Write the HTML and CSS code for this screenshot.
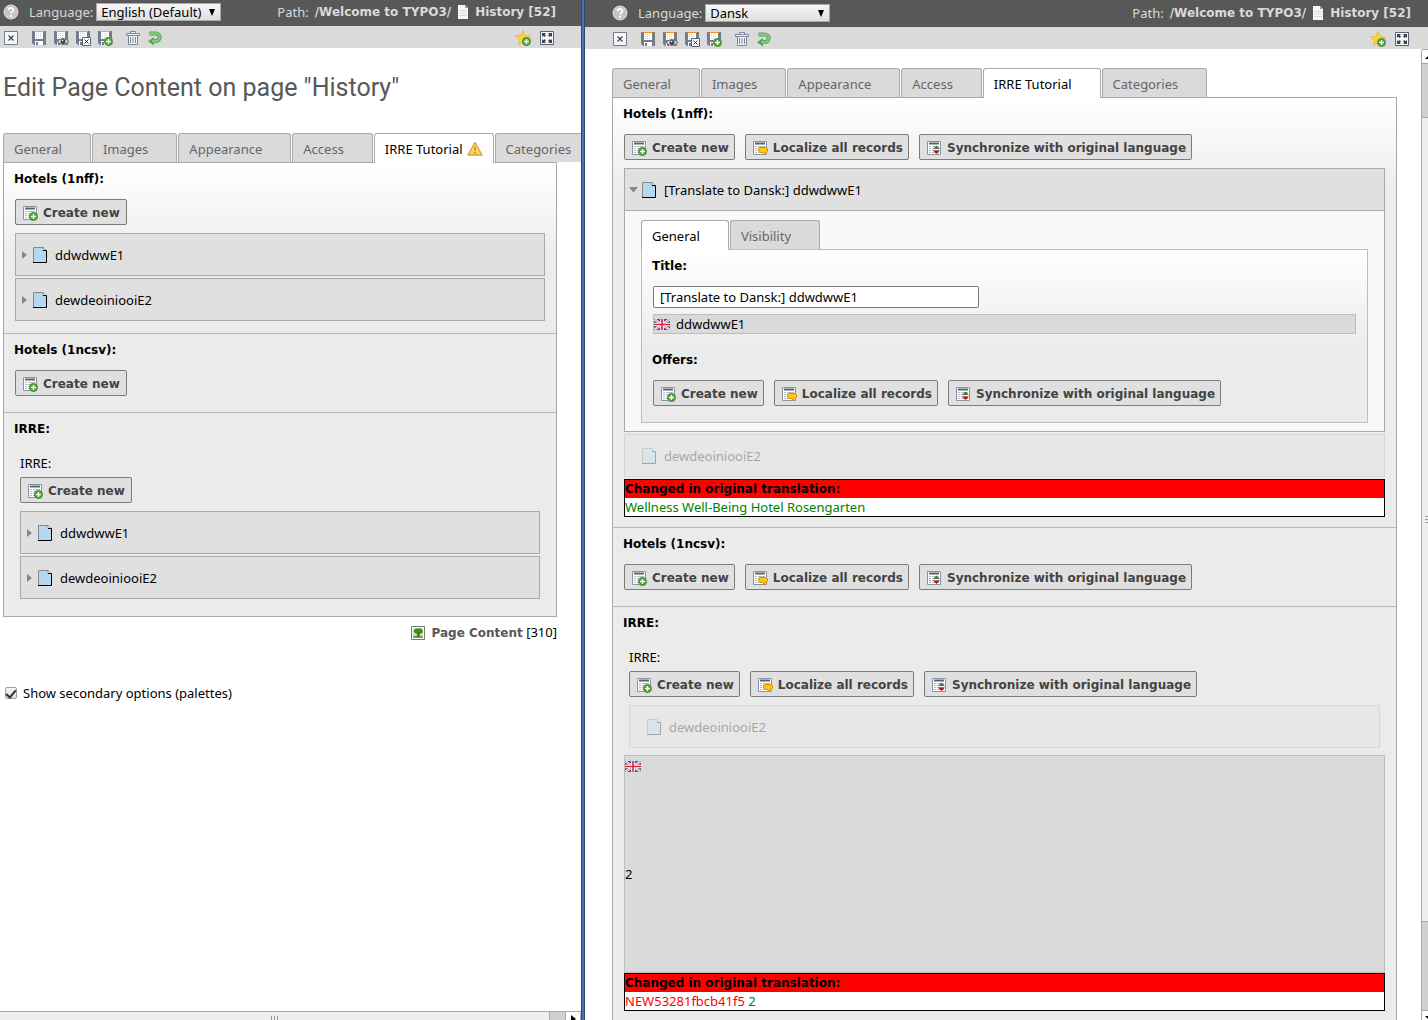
FILE: index.html
```html
<!DOCTYPE html>
<html lang="en">
<head>
<meta charset="utf-8">
<title>Edit Page Content</title>
<link rel="stylesheet" href="styles.css">
</head>
<body>
<svg class="sprite" aria-hidden="true">
  <defs>
    <linearGradient id="gold" x1="0" y1="0" x2="0" y2="1"><stop offset="0" stop-color="#fff0a0"/><stop offset="1" stop-color="#f7d04a"/></linearGradient>
    <g id="plus"><circle cx="11.500" cy="11.500" r="4.500" fill="#4f9a3a"/><path d="M11.500 9v5M9 11.500h5" stroke="#fff" stroke-width="1.400"/></g>
    <g id="disk"><path d="M1 1h14v14H3l-2-2z" fill="#737c8c"/><path d="M4 1h8v8H4z" fill="#fff"/><path d="M5 3.500h6M5 5.500h6M5 7.500h6" stroke="#c9cdd4" stroke-dasharray="1 1"/><path d="M3 1.500h10" stroke="currentColor"/><path d="M4 11h8v4H4z" fill="#fff"/><path d="M5 12h2v3H5z" fill="#737c8c"/></g>
    <g id="sheet"><path d="M1.500 1.500h13v13h-13z" fill="#fff" stroke="#8b94a5"/><path d="M3 3.500h10" stroke="#596273" stroke-width="2"/><path d="M3 6.500h2m1 0h7M3 8.500h2m1 0h7M3 10.500h2m1 0h7M3 12.500h2m1 0h7" stroke="#b4b9c3"/></g>
    <symbol id="i-help" viewBox="0 0 16 16"><circle cx="8" cy="8" r="7" fill="#c4c4c4" stroke="#e4e4e4"/><path d="M5.500 6.200C5.600 3.200 10.500 3.200 10.500 6c0 2-2.400 1.600-2.400 3.600M8.100 11v2" fill="none" stroke="#fff" stroke-width="1.700"/></symbol>
    <symbol id="i-close" viewBox="0 0 16 16"><path d="M1.500 1.500h13v13h-13z" fill="#f6f7f8" stroke="#737c8c"/><path d="M5.500 5.500l5 5M10.500 5.500l-5 5" stroke="#3c414b" stroke-width="1.200"/></symbol>
    <symbol id="i-save" viewBox="0 0 16 16"><use href="#disk"/></symbol>
    <symbol id="i-saveview" viewBox="0 0 16 16"><use href="#disk"/><path d="M4 11.500q6-6 12 0q-6 6-12 0" fill="#ddd" stroke="#666"/><circle cx="10" cy="11.500" r="2.500" fill="#444"/><circle cx="9.500" cy="10.500" r=".8" fill="#fff"/></symbol>
    <symbol id="i-saveclose" viewBox="0 0 16 16"><use href="#disk"/><path d="M7.500 7.500h8v8h-8z" fill="#fff" stroke="#596273"/><path d="M9.500 9.500l4 4M13.500 9.500l-4 4" stroke="#333"/></symbol>
    <symbol id="i-savenew" viewBox="0 0 16 16"><use href="#disk"/><use href="#plus"/></symbol>
    <symbol id="i-trash" viewBox="0 0 16 16"><path d="M5.500 3.500v-2h5v2M1.500 3.500h13v2h-13zM3.500 5.500v9h9v-9" fill="#f4f5f7" stroke="#7d8696"/><path d="M5.500 7v6M8 7v6M10.500 7v6" stroke="#7d8696"/></symbol>
    <symbol id="i-undo" viewBox="0 0 16 16"><path d="M2.500 3.500h6.500a3.400 3.400 0 0 1 0 7.500H6" fill="none" stroke="#4f9f52" stroke-width="4"/><path d="M7 7v8.500L1 11.200z" fill="#4fa552"/><path d="M2.500 3.500h6.500a3.400 3.400 0 0 1 0 7.500H5" fill="none" stroke="#84c97c" stroke-width="2.400"/></symbol>
    <symbol id="i-star" viewBox="0 0 16 16"><path d="M8 .7l2 5 5.500.3-4.200 3.500 1.400 5.300L8 12l-4.700 2.800 1.400-5.300L.5 6 6 5.700z" fill="#fcd733" stroke="#e9b52a" stroke-width=".8"/><use href="#plus"/></symbol>
    <symbol id="i-expand" viewBox="0 0 16 16"><path d="M1.500 1.500h13v13h-13z" fill="#f6f7f8" stroke="#596273"/><path d="M3 3h4L5.700 4.300 7 5.500 5.500 7 4.300 5.700 3 7zM13 3v4l-1.300-1.300L10.500 7 9 5.500l1.300-1.200L9 3zM3 13V9l1.300 1.300L5.500 9 7 10.500l-1.300 1.200L7 13zM13 13H9l1.300-1.300L9 10.500 10.500 9l1.200 1.300L13 9z" fill="#3c414b"/></symbol>
    <symbol id="i-page" viewBox="0 0 12 16"><path d="M1 1h7l3 3v11H1z" fill="#f8f8f8"/><path d="M8 1v3h3z" fill="#999"/><path d="M2 6.500h8M2 9h8M2 11.500h8" stroke="#d8d8d8"/></symbol>
    <symbol id="i-doc" viewBox="0 0 14 16"><path d="M.5 .5h10l3 3v12H.5z" fill="#b3d8f0"/><path d="M.5 15V.5h10" fill="none" stroke="#878787"/><path d="M10 .5l3 3h-3z" fill="#fff" stroke="#777" stroke-width=".6"/><path d="M10 3.500h3.500v12H0" fill="none" stroke="#000"/></symbol>
    <symbol id="i-new" viewBox="0 0 16 16"><use href="#sheet"/><use href="#plus"/></symbol>
    <symbol id="i-localize" viewBox="0 0 16 16"><use href="#sheet"/><path d="M7.500 7.500h6.500l1.500 1.500v2L14 12.500h-1L12.500 15l-2-2.500H8L6.500 11V9z" fill="#ffc90e" stroke="#e08a00"/></symbol>
    <symbol id="i-sync" viewBox="0 0 16 16"><use href="#sheet"/><path d="M7 9l3.500-3.500L14 9z" fill="#427c36"/><path d="M7 10.500h7L10.500 14z" fill="#c40d0d"/></symbol>
    <symbol id="i-warn" viewBox="0 0 16 16"><path d="M8 1.500l7 12.500H1z" fill="url(#gold)" stroke="#da9d3a" stroke-width="1.400" stroke-linejoin="round"/><path d="M8 5.500v4M8 10.800v1.700" stroke="#c08a1c" stroke-width="1.800"/></symbol>
    <symbol id="i-image" viewBox="0 0 16 16"><path d="M1.500 1.500h13v13h-13z" fill="#fff" stroke="#777"/><path d="M3 3h10v10H3z" fill="#c9e8b0"/><path d="M3 11.500q5-3 10 0V13H3z" fill="#62ad35"/><path d="M4 5q1-2 4-1.500Q12 2.500 13 6q0 3-3 2.500Q7 10 5 8 3 7 4 5z" fill="#3e8c1d"/><path d="M9 8l-1 4" stroke="#5d4022" stroke-width="1.500"/></symbol>
    <symbol id="i-flag" viewBox="0 0 16 11"><path d="M0 0h16v11H0z" fill="#3a4a96"/><path d="M0 0l16 11M16 0L0 11" stroke="#fff" stroke-width="2.400"/><path d="M0 0l16 11M16 0L0 11" stroke="#e05060" stroke-width=".8"/><path d="M8 0v11M0 5.500h16" stroke="#fff" stroke-width="3.600"/><path d="M8 0v11M0 5.500h16" stroke="#dc1f35" stroke-width="1.600"/></symbol>
  </defs>
</svg>

<div class="split">
  <section class="pane pane-left">
    <header class="topbar">
      <svg class="icon"><use href="#i-help"/></svg>
      <label class="lang-label" for="lang-a">Language:</label>
      <span class="select"><select id="lang-a"><option>English (Default)</option></select></span>
      <p class="path">Path: <b>/Welcome to TYPO3/</b> <svg class="icon-page"><use href="#i-page"/></svg> <b>History [52]</b></p>
    </header>
    <div class="toolbar">
      <button class="tool" aria-label="Close"><svg class="icon"><use href="#i-close"/></svg></button>
      <div class="tools">
        <button class="tool" aria-label="Save"><svg class="icon"><use href="#i-save"/></svg></button>
        <button class="tool" aria-label="Save and view"><svg class="icon"><use href="#i-saveview"/></svg></button>
        <button class="tool" aria-label="Save and close"><svg class="icon"><use href="#i-saveclose"/></svg></button>
        <button class="tool" aria-label="Save and create new"><svg class="icon"><use href="#i-savenew"/></svg></button>
      </div>
      <div class="tools">
        <button class="tool" aria-label="Delete"><svg class="icon"><use href="#i-trash"/></svg></button>
        <button class="tool" aria-label="Undo"><svg class="icon"><use href="#i-undo"/></svg></button>
      </div>
      <div class="tools tools-end">
        <button class="tool" aria-label="Bookmark"><svg class="icon"><use href="#i-star"/></svg></button>
        <button class="tool" aria-label="Open in new window"><svg class="icon"><use href="#i-expand"/></svg></button>
      </div>
    </div>
    <main class="doc">
      <h1>Edit Page Content on page "History"</h1>
      <nav class="tabs">
        <button class="tab">General</button>
        <button class="tab">Images</button>
        <button class="tab">Appearance</button>
        <button class="tab">Access</button>
        <button class="tab active flagged">IRRE Tutorial <svg class="icon"><use href="#i-warn"/></svg></button>
        <button class="tab">Categories</button>
      </nav>
      <div class="panel">
        <section class="field">
          <h2>Hotels (1nff):</h2>
          <div class="actions"><button class="btn"><svg class="icon"><use href="#i-new"/></svg>Create new</button></div>
          <div class="records">
            <div class="record"><i class="caret"></i><svg class="icon-doc"><use href="#i-doc"/></svg>ddwdwwE1</div>
            <div class="record"><i class="caret"></i><svg class="icon-doc"><use href="#i-doc"/></svg>dewdeoiniooiE2</div>
          </div>
        </section>
        <section class="field">
          <h2>Hotels (1ncsv):</h2>
          <div class="actions"><button class="btn"><svg class="icon"><use href="#i-new"/></svg>Create new</button></div>
        </section>
        <section class="field">
          <h2>IRRE:</h2>
          <div class="sub">
            <h3>IRRE:</h3>
            <div class="actions"><button class="btn"><svg class="icon"><use href="#i-new"/></svg>Create new</button></div>
            <div class="records">
              <div class="record"><i class="caret"></i><svg class="icon-doc"><use href="#i-doc"/></svg>ddwdwwE1</div>
              <div class="record"><i class="caret"></i><svg class="icon-doc"><use href="#i-doc"/></svg>dewdeoiniooiE2</div>
            </div>
          </div>
        </section>
      </div>
      <p class="type"><svg class="icon"><use href="#i-image"/></svg><span><b>Page Content</b> [310]</span></p>
      <label class="palettes"><input type="checkbox" checked>Show secondary options (palettes)</label>
    </main>
    <div class="hscroll"><span class="hthumb"></span><span class="htrack"></span><span class="hend"></span></div>
  </section>

  <div class="divider"></div>

  <section class="pane pane-right">
    <header class="topbar">
      <svg class="icon"><use href="#i-help"/></svg>
      <label class="lang-label" for="lang-b">Language:</label>
      <span class="select"><select id="lang-b"><option>Dansk</option></select></span>
      <p class="path">Path: <b>/Welcome to TYPO3/</b> <svg class="icon-page"><use href="#i-page"/></svg> <b>History [52]</b></p>
    </header>
    <div class="toolbar">
      <button class="tool" aria-label="Close"><svg class="icon"><use href="#i-close"/></svg></button>
      <div class="tools">
        <button class="tool" aria-label="Save"><svg class="icon"><use href="#i-save"/></svg></button>
        <button class="tool" aria-label="Save and view"><svg class="icon"><use href="#i-saveview"/></svg></button>
        <button class="tool" aria-label="Save and close"><svg class="icon"><use href="#i-saveclose"/></svg></button>
        <button class="tool" aria-label="Save and create new"><svg class="icon"><use href="#i-savenew"/></svg></button>
      </div>
      <div class="tools">
        <button class="tool" aria-label="Delete"><svg class="icon"><use href="#i-trash"/></svg></button>
        <button class="tool" aria-label="Undo"><svg class="icon"><use href="#i-undo"/></svg></button>
      </div>
      <div class="tools tools-end">
        <button class="tool" aria-label="Bookmark"><svg class="icon"><use href="#i-star"/></svg></button>
        <button class="tool" aria-label="Open in new window"><svg class="icon"><use href="#i-expand"/></svg></button>
      </div>
    </div>
    <div class="scroller">
      <main class="doc">
        <nav class="tabs">
          <button class="tab">General</button>
          <button class="tab">Images</button>
          <button class="tab">Appearance</button>
          <button class="tab">Access</button>
          <button class="tab active">IRRE Tutorial</button>
          <button class="tab">Categories</button>
        </nav>
        <div class="panel">
          <section class="field">
            <h2>Hotels (1nff):</h2>
            <div class="actions">
              <button class="btn"><svg class="icon"><use href="#i-new"/></svg>Create new</button>
              <button class="btn"><svg class="icon"><use href="#i-localize"/></svg>Localize all records</button>
              <button class="btn"><svg class="icon"><use href="#i-sync"/></svg>Synchronize with original language</button>
            </div>
            <div class="records compact">
              <div class="opened">
                <div class="record"><i class="caret down"></i><svg class="icon-doc"><use href="#i-doc"/></svg>[Translate to Dansk:] ddwdwwE1</div>
                <div class="opened-body">
                  <nav class="tabs">
                    <button class="tab active">General</button>
                    <button class="tab">Visibility</button>
                  </nav>
                  <div class="panel soft">
                    <section class="field">
                      <h2><label for="title">Title:</label></h2>
                      <input class="text" id="title" type="text" value="[Translate to Dansk:] ddwdwwE1">
                      <p class="origin"><svg class="icon-flag"><use href="#i-flag"/></svg>ddwdwwE1</p>
                      <h2>Offers:</h2>
                      <div class="actions">
                        <button class="btn"><svg class="icon"><use href="#i-new"/></svg>Create new</button>
                        <button class="btn"><svg class="icon"><use href="#i-localize"/></svg>Localize all records</button>
                        <button class="btn"><svg class="icon"><use href="#i-sync"/></svg>Synchronize with original language</button>
                      </div>
                    </section>
                  </div>
                </div>
              </div>
              <div class="record dim"><i class="caret none"></i><svg class="icon-doc"><use href="#i-doc"/></svg>dewdeoiniooiE2</div>
              <div class="changed"><h4>Changed in original translation:</h4><p class="ins">Wellness Well-Being Hotel Rosengarten</p></div>
            </div>
          </section>
          <section class="field">
            <h2>Hotels (1ncsv):</h2>
            <div class="actions">
              <button class="btn"><svg class="icon"><use href="#i-new"/></svg>Create new</button>
              <button class="btn"><svg class="icon"><use href="#i-localize"/></svg>Localize all records</button>
              <button class="btn"><svg class="icon"><use href="#i-sync"/></svg>Synchronize with original language</button>
            </div>
          </section>
          <section class="field">
            <h2>IRRE:</h2>
            <div class="sub flush">
              <h3>IRRE:</h3>
              <div class="actions">
                <button class="btn"><svg class="icon"><use href="#i-new"/></svg>Create new</button>
                <button class="btn"><svg class="icon"><use href="#i-localize"/></svg>Localize all records</button>
                <button class="btn"><svg class="icon"><use href="#i-sync"/></svg>Synchronize with original language</button>
              </div>
              <div class="records">
                <div class="record dim"><i class="caret none"></i><svg class="icon-doc"><use href="#i-doc"/></svg>dewdeoiniooiE2</div>
              </div>
            </div>
            <div class="source"><svg class="icon-flag"><use href="#i-flag"/></svg><p>2</p></div>
            <div class="changed"><h4>Changed in original translation:</h4><p><span class="del">NEW53281fbcb41f5</span> <span class="ins">2</span></p></div>
          </section>
        </div>
      </main>
      <div class="vscroll"><span class="vup"></span><span class="vtrack"></span><span class="vthumb"></span><span class="vtrack low"></span><span class="vdown"></span></div>
    </div>
  </section>
</div>
</body>
</html>
```
FILE: styles.css
```css
* { box-sizing: border-box; }

body {
  margin: 0;
  background: #fff;
  color: #000;
  font: 13px/20px "Noto Sans", sans-serif;
}

b, h2, h4, .btn { font-family: "DejaVu Sans", sans-serif; font-size: 12px; font-weight: bold; }
h1, h2, h3, h4, p { margin: 0; }
button, input, select { font: inherit; color: inherit; margin: 0; }

.sprite { position: absolute; width: 0; height: 0; }
.icon { width: 16px; height: 16px; flex: none; display: block; }
.icon-doc { width: 14px; height: 16px; flex: none; }
.icon-page { width: 12px; height: 16px; flex: none; }
.icon-flag { width: 16px; height: 11px; flex: none; display: block; }

.split {
  display: grid;
  grid-template-columns: minmax(0, 581fr) 4px minmax(0, 843fr);
  height: 100vh;
}
.pane { display: flex; flex-direction: column; min-height: 0; overflow: hidden; }
.divider { background: #4472c4; border: solid #3c4658; border-width: 0 1px; }

/* Bars above each document */
.topbar {
  display: flex;
  align-items: center;
  flex: none;
  height: 26px;
  padding: 0 25px 2px 3px;
  background: #585858;
  color: #dadada;
}
.lang-label { margin: 0 3px 0 10px; }
.select { position: relative; display: block; width: 125px; height: 18px; color: #000; }
.select select {
  display: block;
  width: 100%;
  height: 18px;
  padding: 0 4px;
  border: 1px solid #aaa;
  border-radius: 0;
  background: linear-gradient(#f8f8f8, #dedede);
  line-height: 16px;
  appearance: none;
}
.select::after {
  content: "";
  position: absolute;
  right: 6px;
  top: 6px;
  border: solid transparent;
  border-width: 7px 3px 0;
  border-top-color: #000;
  pointer-events: none;
}
.path { display: flex; align-items: center; gap: 6px; margin-left: auto; white-space: nowrap; }
.toolbar {
  display: flex;
  gap: 12px;
  align-items: center;
  flex: none;
  height: 22px;
  padding: 2px 26px 0 3px;
  background: #dadada;
}
.tools { display: flex; gap: 6px; }
.tools-end { gap: 8px; margin-left: auto; }
.tool { padding: 0; border: 0; background: none; color: #d8a878; }
.pane-right .topbar { height: 27px; padding: 0 17px 1px 27px; }
.pane-right .toolbar { padding-left: 27px; padding-right: 18px; }
.pane-right .tool { color: #f58a1f; }

/* Documents */
.doc { flex: 1; min-width: 0; min-height: 0; overflow: hidden; }
.pane-left .doc { padding: 24px 24px 0 3px; }
.pane-right .doc { padding: 19px 24px 0 27px; }
.scroller { display: flex; flex: 1; min-height: 0; }

h1 {
  margin-bottom: 29px;
  color: #585858;
  font: 25px/32px Roboto, sans-serif;
  white-space: nowrap;
}

.tabs { display: flex; gap: 1px; }
.tab {
  flex: none;
  display: flex;
  align-items: center;
  height: 29px;
  padding: 1px 28px 0 10px;
  border: 1px solid #a9a9a9;
  border-bottom: 0;
  border-radius: 3px 3px 0 0;
  background: #dadada;
  color: #666;
}
.tab.active { height: 30px; margin-bottom: -1px; padding-top: 0; background: #fff; color: #000; position: relative; }
.tab.flagged { gap: 4px; padding-right: 10px; }

.panel { border: 1px solid #a9a9a9; background: #ebebeb linear-gradient(#fff, #ebebeb) 0 0 / 100% 100px no-repeat; }
.panel.soft { border-color: #bdbdbd; }
.field { padding: 6px 11px 8px; }
.field + .field { border-top: 1px solid #b9b9b9; }
.pane-right .field:nth-child(3) { padding-bottom: 24px; }
.field h2 { margin: 0 -1px 10px; line-height: 20px; }
.sub { padding: 4px 5px 5px; }
.sub.flush { padding-bottom: 3px; }
.sub h3 { margin-bottom: 4px; font-size: 13px; font-weight: normal; }

.actions { display: flex; gap: 10px; margin-bottom: 8px; }
.btn {
  display: flex;
  align-items: center;
  gap: 5px;
  height: 26px;
  padding: 1px 6px 0;
  border: 1px solid #7b7b7b;
  border-radius: 2px;
  background: #e0e0e0;
  color: #434343;
  white-space: nowrap;
}
.btn:not(:only-child) { padding-right: 5px; }

.records { display: flex; flex-direction: column; gap: 2px; margin-bottom: 4px; }
.records.compact { margin-bottom: 2px; }
.record {
  display: flex;
  align-items: center;
  height: 43px;
  padding: 0 6px;
  border: 1px solid #a9a9a9;
  background: #e0e0e0;
}
.record .icon-doc { margin-right: 8px; }
.record.dim { opacity: .3; }
.caret { width: 5px; margin-right: 6px; border: solid transparent; border-width: 4px 0 4px 5px; border-left-color: #8c857c; }
.caret.down { width: 9px; margin: 0 4px 0 -2px; border-width: 5px 4px 0; border-color: #8c857c transparent transparent; }
.caret.none { border-color: transparent; }

.opened { border: 1px solid #a9a9a9; background: #f9f9f9; }
.opened .record { height: 42px; border-width: 0 0 1px; padding: 0 6px; }
.opened-body { padding: 9px 16px 8px; }
.text {
  display: block;
  width: 326px;
  max-width: 100%;
  height: 22px;
  padding: 0 6px;
  border: 1px solid #7b7b7b;
  border-radius: 2px;
  background: #fff;
}
.origin {
  display: flex;
  align-items: center;
  gap: 6px;
  height: 20px;
  margin: 6px 0 16px;
  border: 1px solid #bdbdbd;
  background: #dadada;
}

.changed { border: 1px solid #000; background: #fff; line-height: 18px; }
.changed h4 { background: #f00; }
.ins { color: #008000; }
.del { color: #f00; }
.source { height: 218px; padding-top: 5px; border: 1px solid #bdbdbd; background: #dadada; }
.source p { margin-top: 92px; }

.type { display: flex; justify-content: flex-end; align-items: center; gap: 6px; margin-top: 5px; }
.type b { color: #585858; }
.palettes { display: flex; align-items: center; gap: 6px; margin: 40px 0 0 2px; }
.palettes input {
  display: grid;
  place-items: center;
  width: 12px;
  height: 12px;
  border: 1px solid #a0a0a0;
  border-radius: 2px;
  background: linear-gradient(#f4f4f4, #dedede);
  appearance: none;
}
.palettes input:checked::before {
  content: "";
  width: 4px;
  height: 8px;
  margin-bottom: 2px;
  border: solid #333;
  border-width: 0 2px 2px 0;
  transform: rotate(40deg);
}

/* Scrollbars */
.hscroll { display: flex; flex: none; height: 9px; border-top: 1px solid #a9a9a9; }
.hthumb { flex: 1; background: #efefef; }
.hthumb::after { content: ""; display: block; width: 7px; height: 5px; margin: 4px auto 0; background: repeating-linear-gradient(90deg, #999 0 1px, transparent 1px 3px); }
.htrack { width: 17px; border: solid #a9a9a9; border-width: 0 1px; background: #d0d0d0; }
.hend { width: 15px; border-radius: 0 3px 0 0; border-right: 1px solid #a9a9a9; }
.hend::after { content: ""; display: block; width: 5px; margin: 3px 0 0 5px; border: solid transparent; border-width: 4px 0 4px 5px; border-left-color: #000; }
.vscroll { display: flex; flex-direction: column; flex: none; width: 7px; overflow: hidden; border: solid #a9a9a9; border-width: 1px 0 0 1px; border-radius: 3px 0 0; background: #efefef; }
.vup { height: 13px; background: #fff; }
.vdown { height: 9px; background: #fff; }
.vup::after, .vdown::after { content: ""; display: block; width: 8px; margin: 5px 0 0 3px; border: solid transparent; border-width: 0 4px 4px; border-bottom-color: #000; }
.vdown::after { border-width: 4px 4px 0; border-color: #000 transparent transparent; }
.vtrack { height: 55px; border: solid #a9a9a9; border-width: 1px 0; background: #d0d0d0; }
.vthumb { flex: 1; display: flex; align-items: center; }
.vthumb::after { content: ""; width: 3px; height: 7px; margin-left: 3px; background: repeating-linear-gradient(#999 0 1px, transparent 1px 3px); }
.vtrack.low { height: 90px; }
```
